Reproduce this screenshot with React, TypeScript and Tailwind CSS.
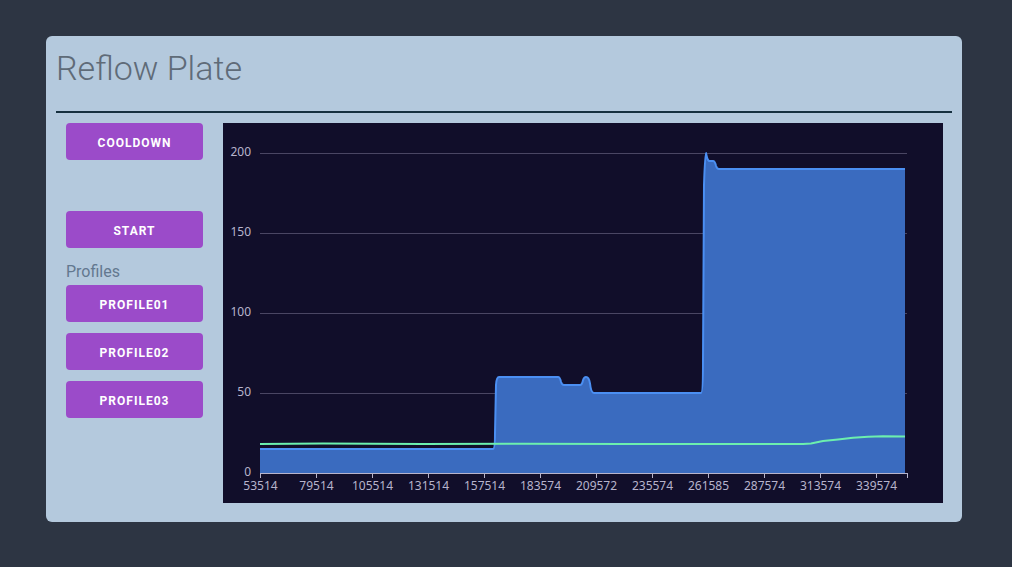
import React from "react";

const X0 = 37;
const X1 = 684;
const yv = (v: number) => 350 - 1.6 * v;

const blueLine = [
  `M ${X0} ${yv(15)}`,
  `L 270 ${yv(15)}`,
  `Q 272 ${yv(15)} 272 ${yv(25)}`,
  `L 273 ${yv(55)}`,
  `Q 273.5 ${yv(60)} 276 ${yv(60)}`,
  `L 335 ${yv(60)}`,
  `Q 337 ${yv(60)} 338 ${yv(57)}`,
  `Q 339 ${yv(55)} 341 ${yv(55)}`,
  `L 357 ${yv(55)}`,
  `Q 359 ${yv(55)} 360 ${yv(58)}`,
  `Q 361 ${yv(60)} 363 ${yv(60)}`,
  `Q 366 ${yv(60)} 367 ${yv(56)}`,
  `Q 368 ${yv(50)} 371 ${yv(50)}`,
  `L 478 ${yv(50)}`,
  `Q 480 ${yv(50)} 480 ${yv(70)}`,
  `L 481 ${yv(180)}`,
  `Q 482 ${yv(200)} 483 ${yv(200)}`,
  `Q 484 ${yv(196)} 486 ${yv(195)}`,
  `L 490 ${yv(195)}`,
  `Q 492 ${yv(195)} 493 ${yv(192)}`,
  `Q 494 ${yv(190)} 496 ${yv(190)}`,
  `L 682 ${yv(190)}`,
].join(" ");

const blueArea = `${blueLine} L 682 350 L ${X0} 350 Z`;

const greenPts: [number, number][] = [
  [X0, 18.2],
  [100, 18.4],
  [200, 18.2],
  [300, 18.3],
  [400, 18.1],
  [500, 18.2],
  [580, 18.1],
  [588, 18.5],
  [600, 20],
  [615, 21],
  [630, 22],
  [645, 22.6],
  [660, 22.9],
  [682, 22.8],
];
const greenLine = greenPts
  .map(([x, v], i) => `${i === 0 ? "M" : "L"} ${x} ${yv(v)}`)
  .join(" ");

const xLabels = [
  "53514",
  "79514",
  "105514",
  "131514",
  "157514",
  "183574",
  "209572",
  "235574",
  "261585",
  "287574",
  "313574",
  "339574",
];

function Chart() {
  return (
    <div className="w-[720px] h-[380px] bg-[#110e2a] shrink-0">
      <svg width="720" height="380" viewBox="0 0 720 380" style={{ fontFamily: "'Noto Sans', sans-serif" }}>
        {[200, 150, 100, 50].map((v) => (
          <line key={v} x1={X0} x2={X1} y1={yv(v) + 0.5} y2={yv(v) + 0.5} stroke="#4a4663" strokeWidth="1" />
        ))}
        {[200, 150, 100, 50, 0].map((v) => (
          <text key={v} x={28} y={yv(v) + 3} textAnchor="end" fontSize="12" fill="#b7b4cc">
            {v}
          </text>
        ))}
        <path d={blueArea} fill="#3a6bbf" />
        <path d={blueLine} fill="none" stroke="#4b8ff2" strokeWidth="2" strokeLinejoin="round" />
        <path d={greenLine} fill="none" stroke="#6cefae" strokeWidth="2" strokeLinejoin="round" />
        <line x1={X0} x2={X1} y1={350.5} y2={350.5} stroke="#b7b4cc" strokeWidth="1" />
        {xLabels.map((l, i) => {
          const x = X0 + i * 56 + 0.5;
          return (
            <g key={l}>
              <line x1={x} x2={x} y1={350} y2={355} stroke="#b7b4cc" strokeWidth="1" />
              <text x={x} y={367} textAnchor="middle" fontSize="12" fill="#b7b4cc">
                {l}
              </text>
            </g>
          );
        })}
        <line x1={X1 + 0.5} x2={X1 + 0.5} y1={350} y2={355} stroke="#b7b4cc" strokeWidth="1" />
      </svg>
    </div>
  );
}

function Btn({ label }: { label: string }) {
  return (
    <button className="w-[137px] h-[37px] pt-[3px] rounded-[4px] bg-[#9b4bc9] text-white text-[12px] font-bold tracking-[1px] flex items-center justify-center font-['Roboto',sans-serif]">
      {label}
    </button>
  );
}

export default function App() {
  return (
    <div className="w-[1012px] h-[567px] bg-[#2d3543] pt-[36px] pl-[46px]">
      <div className="w-[916px] h-[486px] rounded-[6px] bg-[#b4c9dd] px-[10px]">
        <div className="h-[75px] pt-[12px]">
          <h1 className="text-[34px] leading-[1.2] font-light text-[#5f6b78] font-['Roboto',sans-serif]">Reflow Plate</h1>
        </div>
        <div className="h-[2px] bg-[#16303f]" />
        <div className="flex mt-[10px] pl-[10px] gap-[20px]">
          <div className="flex flex-col w-[137px]">
            <Btn label="COOLDOWN" />
            <div className="mt-[51px]">
              <Btn label="START" />
            </div>
            <div className="mt-[12px] text-[16px] leading-[24px] text-[#63788f] font-['Roboto',sans-serif]">Profiles</div>
            <div className="mt-[1px] flex flex-col gap-[11px]">
              <Btn label="PROFILE01" />
              <Btn label="PROFILE02" />
              <Btn label="PROFILE03" />
            </div>
          </div>
          <Chart />
        </div>
      </div>
    </div>
  );
}
